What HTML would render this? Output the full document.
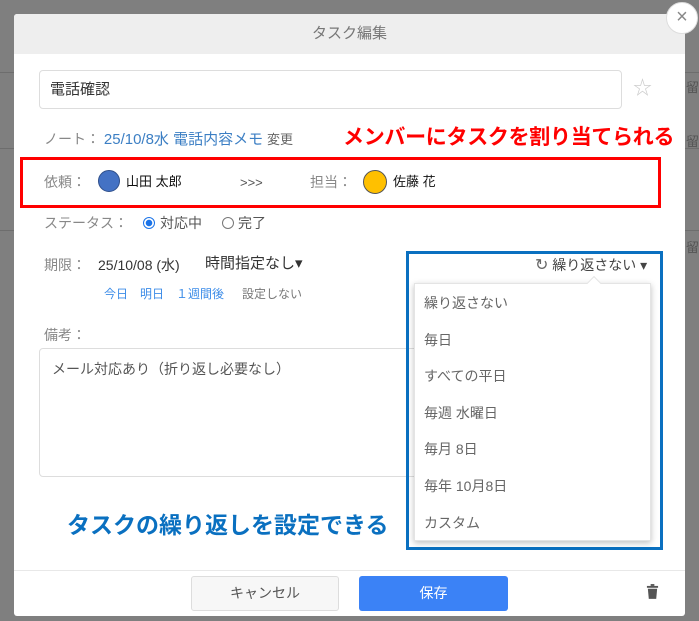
<!DOCTYPE html>
<html><head><meta charset="utf-8"><style>
*{margin:0;padding:0;box-sizing:border-box}
body{width:699px;height:621px;background:#7f7f7f;position:relative;overflow:hidden;font-family:"Liberation Sans","Noto Sans CJK JP",sans-serif;font-size:14px;color:#333;line-height:1.2}
.a{position:absolute;white-space:nowrap}
.g{color:#888}
</style></head><body>
<div class="a" style="left:0;top:72px;width:699px;height:1px;background:#6d6d6d"></div>
<div class="a" style="left:0;top:148px;width:699px;height:1px;background:#6d6d6d"></div>
<div class="a" style="left:0;top:230px;width:699px;height:1px;background:#6d6d6d"></div>
<div class="a" style="left:14px;top:14px;width:671px;height:602px;background:#fff;border-radius:3px"></div>
<div class="a" style="left:14px;top:14px;width:671px;height:40px;background:#eee;border-radius:3px 3px 0 0;text-align:center;line-height:40px;font-size:15px;color:#777">タスク編集</div>
<div class="a" style="left:666px;top:2px;width:32px;height:32px;border-radius:50%;background:#fff;border:1px solid #ddd;text-align:center;line-height:29px;font-size:20px;color:#888">×</div>
<div class="a" style="left:686px;top:80px;font-size:13px;color:#555">留</div>
<div class="a" style="left:686px;top:134px;font-size:13px;color:#555">留</div>
<div class="a" style="left:686px;top:240px;font-size:13px;color:#555">留</div>
<div class="a" style="left:39px;top:70px;width:583px;height:39px;border:1px solid #ddd;border-radius:4px;padding:10px 10px;font-size:15px">電話確認</div>
<div class="a" style="left:633px;top:78px;font-size:19px;color:#ccc">☆</div>
<div class="a g" style="left:44px;top:131px;font-size:14px">ノート： <span style="color:#3c7fc4;font-size:15px">25/10/8水 電話内容メモ</span> <span style="color:#666;font-size:13px">変更</span></div>
<div class="a" style="left:343px;top:125px;font-size:21px;font-weight:bold;color:#f00;letter-spacing:-0.3px">メンバーにタスクを割り当てられる</div>
<div class="a" style="left:20px;top:157px;width:641px;height:51px;border:3px solid #f00"></div>
<div class="a g" style="left:44px;top:174px">依頼：</div>
<div class="a" style="left:98px;top:170px;width:22px;height:22px;border-radius:50%;background:#4472c4;border:1px solid #2f4f8a"></div>
<div class="a" style="left:126px;top:174px;font-size:13px;color:#111">山田 太郎</div>
<div class="a" style="left:240px;top:175px;font-size:13px;color:#555">&gt;&gt;&gt;</div>
<div class="a g" style="left:310px;top:174px">担当：</div>
<div class="a" style="left:363px;top:170px;width:24px;height:24px;border-radius:50%;background:#ffc000;border:1px solid #555"></div>
<div class="a" style="left:393px;top:174px;font-size:13px;color:#111">佐藤 花</div>
<div class="a g" style="left:44px;top:215px">ステータス：</div>
<div class="a" style="left:143px;top:217px;width:12px;height:12px;border-radius:50%;border:1px solid #1a73e8;background:radial-gradient(#1a73e8 3px,#fff 3.5px)"></div>
<div class="a" style="left:160px;top:215px;color:#555">対応中</div>
<div class="a" style="left:222px;top:217px;width:12px;height:12px;border-radius:50%;border:1px solid #777"></div>
<div class="a" style="left:238px;top:215px;color:#555">完了</div>
<div class="a g" style="left:44px;top:257px">期限：</div>
<div class="a" style="left:98px;top:257px;font-size:14px;color:#333">25/10/08 (水)</div>
<div class="a" style="left:205px;top:255px;font-size:15px;color:#333">時間指定なし▾</div>
<div class="a" style="left:104px;top:287px;font-size:12px;color:#3c8ce8">今日　明日　１週間後</div>
<div class="a" style="left:242px;top:287px;font-size:12px;color:#777">設定しない</div>
<div class="a g" style="left:44px;top:327px">備考：</div>
<div class="a" style="left:39px;top:348px;width:400px;height:129px;border:1px solid #ddd;border-radius:4px;padding:12px 12px;font-size:14px;color:#555">メール対応あり（折り返し必要なし）</div>
<div class="a" style="left:406px;top:251px;width:257px;height:299px;border:3px solid #0a70c0"></div>
<div class="a" style="left:535px;top:256px;font-size:14px;color:#444"><span style="font-size:16px;color:#666">↻</span> 繰り返さない ▾</div>
<div class="a" style="left:414px;top:283px;width:237px;height:258px;background:#fff;box-shadow:0 2px 6px rgba(0,0,0,.25);border:1px solid #e4e4e4"></div>
<div class="a" style="left:589px;top:278px;width:10px;height:10px;background:#fff;transform:rotate(45deg);border-left:1px solid #e4e4e4;border-top:1px solid #e4e4e4"></div>
<div class="a" style="left:424px;top:285px;color:#666;line-height:36.6px;font-size:14px">繰り返さない<br>毎日<br>すべての平日<br>毎週 水曜日<br>毎月 8日<br>毎年 10月8日<br>カスタム</div>
<div class="a" style="left:67px;top:512px;font-size:23px;font-weight:bold;color:#0a70c0">タスクの繰り返しを設定できる</div>
<div class="a" style="left:14px;top:570px;width:671px;height:1px;background:#e8e8e8"></div>
<div class="a" style="left:191px;top:576px;width:148px;height:35px;border:1px solid #ddd;border-radius:3px;background:#f7f7f7;text-align:center;line-height:33px;color:#555">キャンセル</div>
<div class="a" style="left:359px;top:576px;width:149px;height:35px;border-radius:3px;background:#3b82f6;text-align:center;line-height:35px;color:#fff">保存</div>
<svg class="a" style="left:646px;top:584px" width="13" height="15" viewBox="0 0 14 16"><rect x="1" y="2" width="12" height="2" fill="#555"/><rect x="5" y="0" width="4" height="2" fill="#555"/><path d="M2 5h10l-1 11H3z" fill="#555"/></svg>
</body></html>
